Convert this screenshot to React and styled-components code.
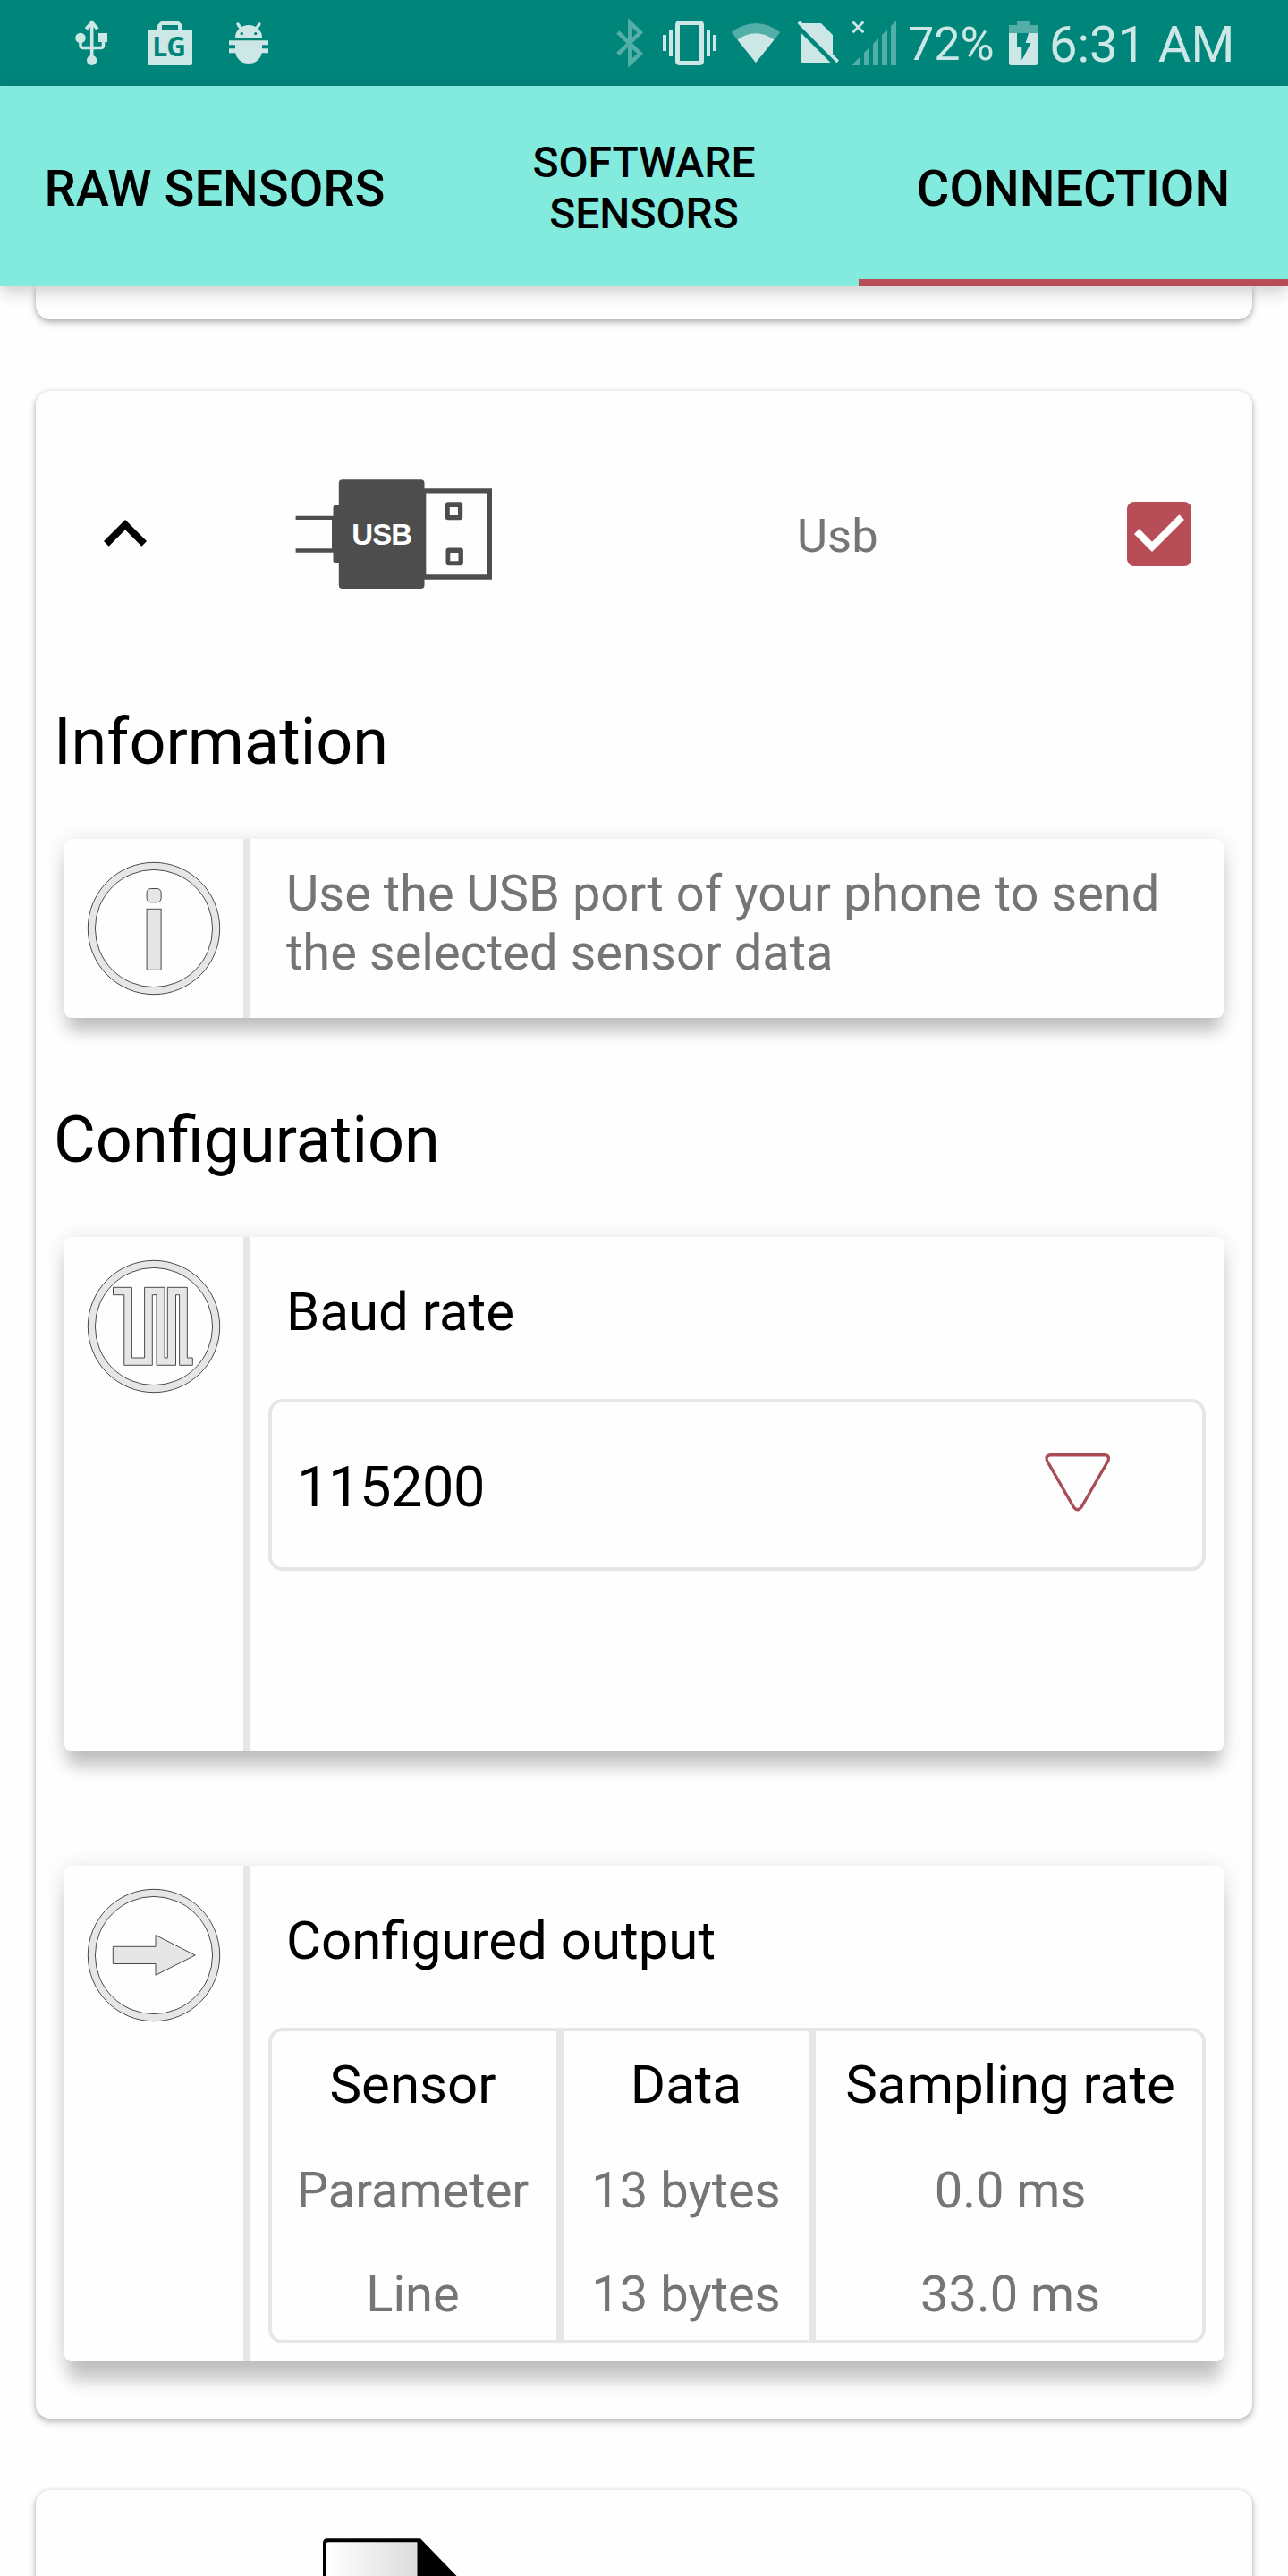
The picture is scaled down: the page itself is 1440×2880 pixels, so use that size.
import React from "react";
import styled, { createGlobalStyle, css } from "styled-components";

const Global = createGlobalStyle`
  * { box-sizing: border-box; }
  body {
    margin: 0;
    background: #fefefe;
    font-family: Roboto, "Noto Sans", sans-serif;
    color: #000;
  }
`;

const LINE = "#e6e6e6";
const ACCENT = "#b74d56";
const MUTED = "#757575";
const ICON = "#cce7e5";
const ICON_DIM = "#54aea8";
const STATUS_BG = "#00857b";

const Screen = styled.div`
  width: 1440px;
  height: 2880px;
  overflow: hidden;
  display: flex;
  flex-direction: column;
`;

/* ---------- status bar ---------- */

const StatusBar = styled.header`
  height: 96px;
  flex: none;
  display: flex;
  justify-content: space-between;
  background: ${STATUS_BG};
  color: ${ICON};
`;

const StatusGroup = styled.div`
  display: flex;
  padding: ${(p) => p.$pad};
  svg { flex: none; display: block; }
`;

const StatusText = styled.span`
  width: ${(p) => p.$width}px;
  padding-left: ${(p) => p.$indent}px;
  font-size: ${(p) => p.$size}px;
  line-height: ${(p) => p.$line}px;
  white-space: nowrap;
`;

function StatusIcon({ from, to, children }) {
  return (
    <svg width={to - from} height="96" viewBox={`${from} 0 ${to - from} 96`} fill={ICON}>
      {children}
    </svg>
  );
}

/* ---------- tabs ---------- */

const TabBar = styled.nav`
  position: relative;
  z-index: 1;
  flex: none;
  height: 224px;
  display: grid;
  grid-template-columns: repeat(3, 480px);
  background: #82ebde;
  box-shadow: 0 6px 18px rgba(0, 0, 0, 0.2);
`;

const Tab = styled.div`
  display: flex;
  align-items: center;
  justify-content: center;
  text-align: center;
  padding-top: ${(p) => (p.$small ? 4 : 6)}px;
  font-weight: 500;
  font-size: ${(p) => (p.$small ? 48 : 56)}px;
  line-height: ${(p) => (p.$small ? 57 : 66)}px;
  ${(p) => p.$active && css`
    box-shadow: inset 0 -8px 0 ${ACCENT};
  `}
`;

/* ---------- cards ---------- */

const List = styled.main`
  flex: 1;
  min-height: 0;
  display: flex;
  flex-direction: column;
  gap: 80px;
  padding: 0 40px;
`;

const Card = styled.section`
  flex: none;
  height: ${(p) => p.$height}px;
  border-radius: ${(p) => (p.$cut ? "0 0 16px 16px" : "16px")};
  background: #fefefe;
  box-shadow: 0 4px 8px rgba(0, 0, 0, 0.22), 0 1px 5px rgba(0, 0, 0, 0.16);
`;

const CardHeader = styled.div`
  height: 320px;
  display: grid;
  grid-template-columns: 237px 333px 1fr auto;
  align-items: center;
  padding: 0 68px 0 52px;
  svg { display: block; }
`;

const DeviceName = styled.div`
  padding: 4px 0 0 229px;
  font-size: 52.5px;
  line-height: 62px;
  color: ${MUTED};
`;

const CheckBox = styled.div`
  width: 72px;
  height: 72px;
  border-radius: 8px;
  background: ${ACCENT};
`;

const SectionTitle = styled.h2`
  margin: 0;
  padding: ${(p) => p.$top}px 0 0 20px;
  height: ${(p) => p.$height}px;
  font-weight: 400;
  font-size: 72px;
  line-height: 84px;
`;

const Panel = styled.div`
  display: flex;
  height: ${(p) => p.$height}px;
  margin: 0 32px ${(p) => p.$after || 0}px;
  border-radius: 8px;
  background: #fefefe;
  box-shadow: 0 ${(p) => p.$drop}px 18px -4px rgba(0, 0, 0, 0.18), 0 4px 24px rgba(0, 0, 0, 0.14);
`;

const PanelIcon = styled.div`
  flex: none;
  width: 208px;
  border-right: 8px solid ${LINE};
  svg { display: block; }
`;

const PanelBody = styled.div`
  flex: 1;
  padding: 0 20px;
`;

const InfoText = styled.p`
  margin: 0;
  padding: 28px 0 0 20px;
  font-size: 56px;
  line-height: 66px;
  color: ${MUTED};
`;

const PanelTitle = styled.h3`
  margin: 0;
  height: 181px;
  padding: 49px 0 0 20px;
  font-weight: 400;
  font-size: 60px;
  line-height: 70px;
`;

const Select = styled.div`
  height: 192px;
  border: 4px solid ${LINE};
  border-radius: 16px;
  display: flex;
  align-items: flex-start;
  justify-content: space-between;
  padding: 55px 102px 0 28px;
  font-size: 63px;
  line-height: 80px;
  letter-spacing: -0.4px;
`;

const Table = styled.div`
  display: grid;
  grid-template-columns: 318px 282px 1fr;
  height: 353px;
  overflow: hidden;
  border: 4px solid ${LINE};
  border-radius: 16px;
`;

const Column = styled.div`
  display: flex;
  flex-direction: column;
  align-items: center;
  padding-top: 25px;
  & + & { border-left: 8px solid ${LINE}; }
  &:first-child { padding-right: 3px; }
  &:last-child { padding-left: 3px; }
`;

const HeadCell = styled.div`
  height: 121px;
  font-size: 60px;
  line-height: 70px;
  white-space: nowrap;
`;

const Cell = styled.div`
  flex: none;
  height: 116px;
  font-size: 56px;
  line-height: 65px;
  color: ${MUTED};
  white-space: nowrap;
`;

function RoundIcon({ children }) {
  return (
    <svg width="200" height="200" viewBox="0 0 200 200" fill={LINE} stroke="#4a4a4a" strokeWidth="1">
      <circle cx="100" cy="100" r="73.7" />
      <circle cx="100" cy="100" r="65.6" fill="#fefefe" />
      {children}
    </svg>
  );
}

const columns = [
  { title: "Sensor", cells: ["Parameter", "Line"] },
  { title: "Data", cells: ["13 bytes", "13 bytes"] },
  { title: "Sampling rate", cells: ["0.0 ms", "33.0 ms"] },
];

function Status() {
  return (
    <StatusBar>
      <StatusGroup $pad="0 0 0 58px">
        <StatusIcon from={58} to={146}>
          <g fill="none" stroke={ICON} strokeWidth="3.6">
            <path d="M102.7 28V66" />
            <path d="M96.300 32.300L102.700 25.300L109.100 32.300" strokeWidth="4" />
            <path d="M90 45V50.500Q90 53.500 93 53.500H112.500Q115.500 53.500 115.500 50.500V45" />
          </g>
          <circle cx="90" cy="42.500" r="5.800" />
          <rect x="110" y="37" width="10" height="10" />
          <circle cx="102.600" cy="67.400" r="5.600" />
        </StatusIcon>
        <StatusIcon from={146} to={234}>
          <path fillRule="evenodd" d="M176 33V28L181 23H199L204 28V33H215V71Q215 73 213 73H167Q165 73 165 71V33ZM181 33H199V28H181Z" />
          <text x="170.300" y="63.300" fill={STATUS_BG} fontFamily="Open Sans" fontWeight="700" fontSize="30" textLength="37.600" lengthAdjust="spacing">LG</text>
        </StatusIcon>
        <StatusIcon from={234} to={322}>
          <path d="M263 43V42A15 14 0 0 1 293 42V43Z" />
          <path d="M266 27L270.500 33.500M290 27L285.500 33.500" stroke={ICON} strokeWidth="3.400" strokeLinecap="round" />
          <circle cx="270.300" cy="37.600" r="1.700" fill={STATUS_BG} />
          <circle cx="285.700" cy="37.600" r="1.700" fill={STATUS_BG} />
          <path d="M256 45.300H300V50.300H293V54.300H300V59.300H292.700C291.500 66.500 285.500 71 278 71S264.500 66.500 263.300 59.300H256V54.300H263V50.300H256Z" />
        </StatusIcon>
      </StatusGroup>

      <StatusGroup $pad="0 60px 0 0">
        <StatusIcon from={680} to={735}>
          <path d="M690.800 36L715.800 60L704.500 70.500V25.500L715.800 36.300L690.800 60.500" fill="none" stroke={ICON_DIM} strokeWidth="4.600" />
          <path d="M702 23H706.500V73H702Z" fill={ICON_DIM} />
        </StatusIcon>
        <StatusIcon from={735} to={809}>
          <rect x="757.500" y="25.500" width="27" height="45" rx="2" fill="none" stroke={ICON} strokeWidth="5" />
          <path d="M741 39h4v18h-4zM748 33h4v30h-4zM790 33h4v30h-4zM797 39h4v18h-4z" />
        </StatusIcon>
        <StatusIcon from={809} to={881}>
          <path d="M817.700 36Q845 16 872.300 36L845 70Z" fill={ICON_DIM} />
          <path d="M824.500 44.500Q845 30 865.500 44.500L845 70Z" />
        </StatusIcon>
        <StatusIcon from={881} to={945}>
          <path d="M891.500 26L894.300 23.300L897.300 26H918L931 39V60.500L938 67.500L935.400 70.200Z" />
          <path d="M895 36.300L928.500 70H897Q895 70 895 68Z" />
        </StatusIcon>
        <StatusIcon from={945} to={1013}>
          <path d="M952 73L962 63V73ZM966 59L972 53V73H966ZM976 49L982 43V73H976ZM986 39L992 33V73H986ZM996 29L1002 23V73H996Z" fill={ICON_DIM} />
          <path d="M953.400 24.400L965.400 36.200M965.400 24.400L953.400 36.200" stroke={ICON} strokeWidth="2.800" />
        </StatusIcon>
        <StatusText $width={107} $indent={2} $size={52} $line={99}>72%</StatusText>
        <StatusIcon from={1120} to={1168}>
          <path d="M1128 37V28H1137V23H1151V28H1160V37Z" fill={ICON_DIM} />
          <path d="M1128 37H1160V70.500Q1160 73 1157.500 73H1130.500Q1128 73 1128 70.500Z" />
          <path d="M1137 37H1150L1146.700 48H1152.500L1142.300 67.500V52H1137Z" fill={STATUS_BG} />
        </StatusIcon>
        <StatusText $width={212} $indent={5} $size={56} $line={100}>6:31 AM</StatusText>
      </StatusGroup>
    </StatusBar>
  );
}

export default function App() {
  return (
    <>
      <Global />
      <Screen>
        <Status />
        <TabBar>
          <Tab>RAW SENSORS</Tab>
          <Tab $small>SOFTWARE<br />SENSORS</Tab>
          <Tab $active>CONNECTION</Tab>
        </TabBar>
        <List>
          <Card $height={37} $cut />

          <Card $height={2267}>
            <CardHeader>
              <svg width="96" height="96" viewBox="0 0 24 24">
                <path d="M12 8l-6 6 1.410 1.410L12 10.830l4.590 4.580L18 14z" />
              </svg>
              <svg width="222" height="124" viewBox="329 535 222 124" fill="#4d4d4d">
                <path d="M330.600 576.700H373V581H330.600ZM330.600 613.300H373V617.700H330.600Z" />
                <path d="M371 581H372.500V567Q372.500 565 374.500 565H380V629H374.500Q372.500 629 372.500 627V613.500H371Z" />
                <rect x="378.800" y="536.300" width="95.700" height="121.700" rx="4" />
                <path fillRule="evenodd" d="M474 546.300H550V647.800H474ZM476.300 551.500V642.300H545V551.500Z" />
                <path fillRule="evenodd" d="M501 561.300H514Q517.200 561.300 517.200 564.500V578Q517.200 581.200 514 581.200H501Q497.800 581.200 497.800 578V564.500Q497.800 561.300 501 561.300ZM502.800 567V576H512V567Z" />
                <path fillRule="evenodd" d="M501.700 612.500H514.700Q517.900 612.500 517.900 615.700V629.100Q517.900 632.300 514.700 632.300H501.700Q498.500 632.300 498.500 629.100V615.700Q498.500 612.500 501.700 612.500ZM503.300 618V627.300H512.500V618Z" />
                <text x="393.200" y="609" fill="#fff" fontFamily="Liberation Sans" fontWeight="700" fontSize="33" textLength="68">USB</text>
              </svg>
              <DeviceName>Usb</DeviceName>
              <CheckBox>
                <svg width="72" height="72" viewBox="3 3 18 18" fill="#fff">
                  <path d="M10 17l-5-5 1.410-1.410L10 14.170l7.590-7.590L19 8z" />
                </svg>
              </CheckBox>
            </CardHeader>

            <SectionTitle $top={31} $height={181}>Information</SectionTitle>
            <Panel $height={200} $drop={20}>
              <PanelIcon>
                <RoundIcon>
                  <rect x="92.100" y="55.500" width="16" height="15.300" rx="4.500" />
                  <rect x="92.100" y="78.300" width="16" height="68" />
                </RoundIcon>
              </PanelIcon>
              <PanelBody>
                <InfoText>
                  Use the USB port of your phone to send
                  <br />
                  the selected sensor data
                </InfoText>
              </PanelBody>
            </Panel>

            <SectionTitle $top={95} $height={245}>Configuration</SectionTitle>
            <Panel $height={575} $after={128} $drop={22}>
              <PanelIcon>
                <RoundIcon>
                  <path d="M54.500 56.300H75.400V135H89.600V56.300H112V135H115.300V56.300H137.300V135H143.300V143.300H128.600V64.700H124.500V143.300H103V64.700H98.300V143.300H66.800V64.700H54.500Z" />
                </RoundIcon>
              </PanelIcon>
              <PanelBody>
                <PanelTitle>Baud rate</PanelTitle>
                <Select>
                  115200
                  <svg width="76" height="68" viewBox="1166 1623 76 68" fill="none" stroke="#a94c54" strokeWidth="3.400" strokeLinejoin="round">
                    <path d="M1174 1626.700H1235.500Q1241 1627.500 1239 1633L1209 1685Q1204.700 1690.500 1200.400 1685L1170.500 1633Q1168.500 1627.500 1174 1626.700Z" />
                  </svg>
                </Select>
              </PanelBody>
            </Panel>

            <Panel $height={554} $drop={27}>
              <PanelIcon>
                <RoundIcon>
                  <path d="M54.300 90.300H102V77.500L146.200 100L102 122.200V109.500H54.300Z" />
                </RoundIcon>
              </PanelIcon>
              <PanelBody>
                <PanelTitle>Configured output</PanelTitle>
                <Table>
                  {columns.map((col) => (
                    <Column key={col.title}>
                      <HeadCell>{col.title}</HeadCell>
                      {col.cells.map((text, i) => (
                        <Cell key={i}>{text}</Cell>
                      ))}
                    </Column>
                  ))}
                </Table>
              </PanelBody>
            </Panel>
          </Card>

          <Card $height={400}>
            <FileIcon />
          </Card>
        </List>
      </Screen>
    </>
  );
}

const FileSvg = styled.svg`
  display: block;
  margin: 54px 0 0 320px;
`;

function FileIcon() {
  return (
    <FileSvg width="200" height="240" viewBox="360 2838 200 240">
      <defs>
        <linearGradient id="sheet" x1="0" x2="1" y1="0" y2="0">
          <stop offset="0" stopColor="#fff" />
          <stop offset="1" stopColor="#dcdcdc" />
        </linearGradient>
      </defs>
      <path d="M361 3078V2843.500Q361 2838.300 366 2838.300H470L560 2931V3078Z" />
      <path d="M364.700 3078V2844.500Q364.700 2842.300 367 2842.300H466.500V3078Z" fill="url(#sheet)" />
    </FileSvg>
  );
}
